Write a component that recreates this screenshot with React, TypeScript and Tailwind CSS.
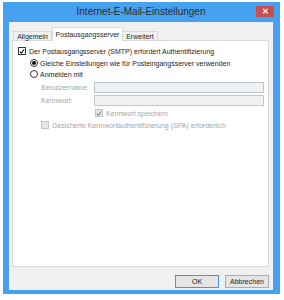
const font = "font-['Liberation_Sans',Arial,sans-serif]";

const CheckMark = ({ color }: { color: string }) => (
    <svg width="7" height="7" viewBox="0 0 7 7" className="block">
        <path d="M1 3.6 L2.8 5.4 L6 1.2" fill="none" stroke={color} strokeWidth="1.3" />
    </svg>
);

const Checkbox = ({ checked, disabled }: { checked?: boolean; disabled?: boolean }) => (
    <span
        className={
            disabled
                ? "flex h-[8px] w-[8px] shrink-0 items-center justify-center border border-[#c4c4c4] bg-[#e6e6e6]"
                : "flex h-[8px] w-[8px] shrink-0 items-center justify-center border border-[#333333] bg-white"
        }
    >
        {checked && <CheckMark color={disabled ? "#8a8a8a" : "#111111"} />}
    </span>
);

const Radio = ({ checked }: { checked?: boolean }) => (
    <span className="flex h-[8px] w-[8px] shrink-0 items-center justify-center rounded-full border border-[#333333] bg-white">
        {checked && <span className="h-[4px] w-[4px] rounded-full bg-[#111111]" />}
    </span>
);

export default function App() {
    return (
        <div className={`h-[300px] w-[284px] bg-white pt-[2px] pl-[3px] ${font}`}>
            <div className="flex h-[292px] w-[277px] flex-col bg-[#47a1f1] pr-[7px] pb-[4px] pl-[6px]">
                {/* title bar */}
                <div className="relative flex h-[20px] shrink-0 items-center justify-center">
                    <span className="text-[10px] leading-none text-[#2b2b2b]">
                        Internet-E-Mail-Einstellungen
                    </span>
                    <div className="absolute top-[4px] right-[-1px] flex h-[11px] w-[18px] items-center justify-center bg-[#c75050] text-[8px] leading-none font-bold text-white">
                        ✕
                    </div>
                </div>

                {/* client area */}
                <div className="flex flex-1 flex-col bg-[#f0f0f0] pt-[5px] pr-[4px] pl-[3px] text-[7px] leading-none text-[#1e1e1e]">
                    <div className="relative z-10 flex h-[13px] items-end pl-[1px]">
                        <div className="flex h-[9px] w-[39px] items-center justify-center border border-b-0 border-[#d9d9d9] bg-[#f0f0f0]">
                            Allgemein
                        </div>
                        <div className="mb-[-1px] flex h-[14px] w-[71px] items-center justify-center border border-b-0 border-[#d9d9d9] bg-white">
                            Postausgangsserver
                        </div>
                        <div className="flex h-[9px] w-[35px] items-center justify-center border border-b-0 border-l-0 border-[#d9d9d9] bg-[#f0f0f0]">
                            Erweitert
                        </div>
                    </div>

                    <div className="flex h-[227px] flex-col border border-[#d9d9d9] bg-white pt-[5px] pl-[5px]">
                        <div className="flex h-[10px] items-center gap-[3px]">
                            <Checkbox checked />
                            <span>Der Postausgangsserver (SMTP) erfordert Authentifizierung</span>
                        </div>
                        <div className="mt-[2px] flex h-[10px] items-center gap-[2px] pl-[12px]">
                            <Radio checked />
                            <span>Gleiche Einstellungen wie für Posteingangsserver verwenden</span>
                        </div>
                        <div className="mt-[1px] flex h-[10px] items-center gap-[2px] pl-[12px]">
                            <Radio />
                            <span>Anmelden mit</span>
                        </div>
                        <div className="mt-[3px] flex h-[11px] items-center pl-[23px] text-[#a6a6a6]">
                            <span className="w-[53px]">Benutzername:</span>
                            <div className="h-[11px] w-[170px] border border-[#b9c7d6] bg-[#f0f0f0]" />
                        </div>
                        <div className="mt-[2px] flex h-[11px] items-center pl-[23px] text-[#a6a6a6]">
                            <span className="w-[53px]">Kennwort:</span>
                            <div className="h-[11px] w-[170px] border border-[#b9c7d6] bg-[#f0f0f0]" />
                        </div>
                        <div className="mt-[2px] flex h-[10px] items-center gap-[3px] pl-[77px] text-[#a6a6a6]">
                            <Checkbox checked disabled />
                            <span>Kennwort speichern</span>
                        </div>
                        <div className="mt-[2px] flex h-[10px] items-center gap-[3px] pl-[23px] text-[#a6a6a6]">
                            <Checkbox disabled />
                            <span>Gesicherte Kennwortauthentifizierung (SPA) erforderlich</span>
                        </div>
                    </div>

                    <div className="mt-[8px] flex justify-end gap-[6px]">
                        <button className="flex h-[13px] w-[44px] items-center justify-center border border-[#3c9be8] bg-[#e5e5e5] text-[7px] leading-none text-[#1e1e1e]">
                            OK
                        </button>
                        <button className="flex h-[13px] w-[44px] items-center justify-center border border-[#adadad] bg-[#e5e5e5] text-[7px] leading-none text-[#1e1e1e]">
                            Abbrechen
                        </button>
                    </div>
                </div>
            </div>
        </div>
    );
}
